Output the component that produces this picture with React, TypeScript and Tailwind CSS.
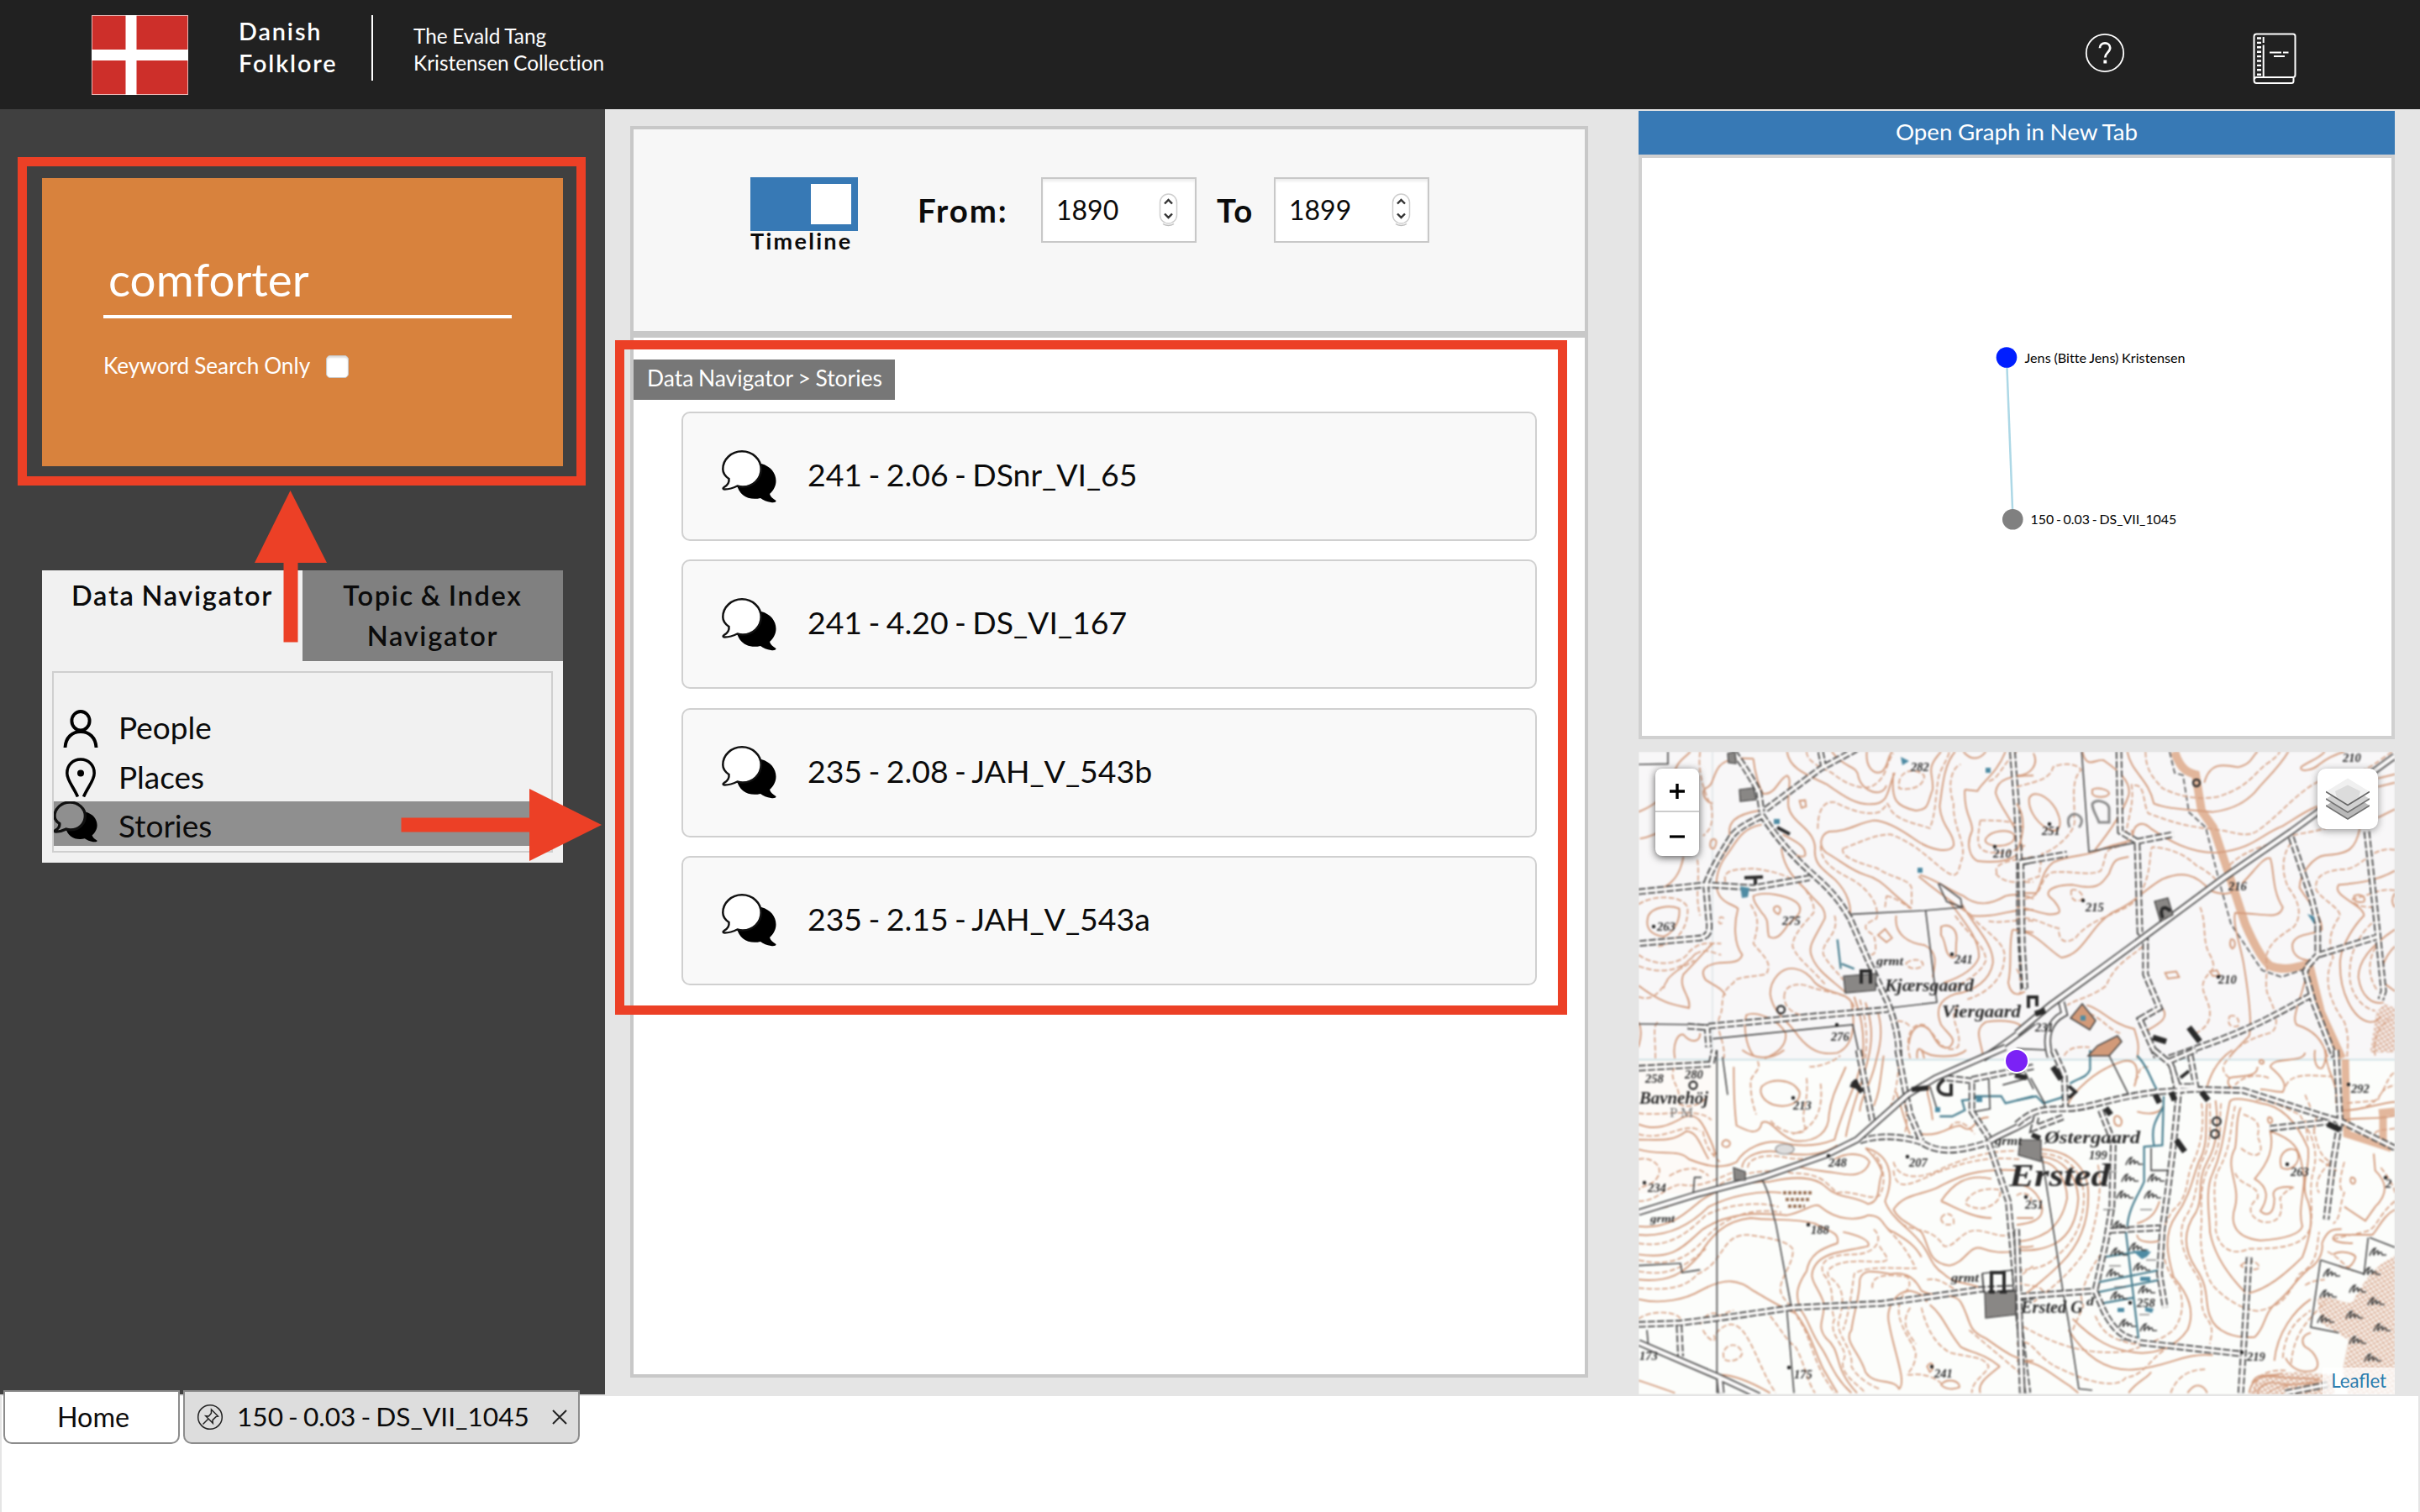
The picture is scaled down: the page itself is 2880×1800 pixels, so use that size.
import React from 'react';

/* ---------- icons ---------- */

function FlagIcon() {
  return (
    <svg width="115" height="95" viewBox="0 0 115 95" className="block shrink-0">
      <rect x="0.5" y="0.5" width="114" height="94" fill="#cd2f2a" stroke="#eab5b3" />
      <path d="M40.5 0h13v95h-13zM0 41h115v13H0z" fill="#fff" />
    </svg>
  );
}

function HelpIcon() {
  return (
    <svg width="48" height="48" viewBox="0 0 48 48" fill="none" stroke="#fff" className="block">
      <circle cx="24" cy="24" r="22.2" strokeWidth="1.8" />
      <path d="M17.9 18.3c.1-3.6 2.700-5.900 6.200-5.900s6.100 2.300 6.100 5.700c0 2.500-1.300 3.900-3.200 5.800-1.900 1.900-2.700 3-2.700 5.600" strokeWidth="2.700" />
      <path d="M24.300 32.500v4" strokeWidth="3.800" />
    </svg>
  );
}

function BookIcon() {
  return (
    <svg width="52" height="62" viewBox="0 0 52 62" fill="none" stroke="#fff" strokeWidth="2" className="block">
      <path d="M1.500 56V4.500c0-2 1-3 3-3h43.500c2 0 2.500 1 2.500 2.500V50c0 2-1 3-2.500 3H4.500c-4 0-4 7 0 7H46c2 0 2.500-1 2.500-2.500V53" />
      <path d="M12.700 5v7M12.700 14.500V53" />
      <path d="M5 6.500h5M5 11.900h5M5 17.300h5M5 22.700h5M5 28.100h5M5 33.500h5M5 38.900h5M5 44.300h5M5 49.700h5" strokeWidth="2.400" />
      <path d="M20 23.500h14M36 23.500h6.500M25 28h13" />
    </svg>
  );
}

function PersonIcon() {
  return (
    <svg width="42" height="46" viewBox="0 0 42 46" fill="none" stroke="#000" strokeWidth="3.900" className="block">
      <ellipse cx="21" cy="13.200" rx="10.600" ry="11.200" />
      <path d="M2.500 45C3 33 11 26 21 26s18 7 18.500 19" />
    </svg>
  );
}

function PinPlaceIcon() {
  return (
    <svg width="42" height="47" viewBox="0 0 42 47" fill="none" stroke="#000" strokeWidth="3.500" className="block">
      <path d="M17.500 46.500C12 34 4.800 27 4.800 18.500 4.800 8.500 12 2 21 2s16.200 6.500 16.200 16.500c0 8.500-7.200 15.500-12.700 28" />
      <circle cx="21" cy="18.500" r="4" fill="#000" stroke="none" />
    </svg>
  );
}

function ChatIcon({ className, bubble, outline }: { className: string; bubble: string; outline: number }) {
  return (
    <svg viewBox="0 0 65 63" className={className} preserveAspectRatio="none">
      <path d="M47 16C58 19 64.500 27 64.500 36.500c0 6-3 11.500-7.500 15.500 1 3.500 4 5.500 7.500 8 .5 2-3 2.500-6 2-5-.7-9-2.500-12.500-5C32 60.500 20 53 18 41z" fill="#000" />
      <path
        d="M24 1.300c12.500 0 22.700 9.500 22.700 21.200S37 43.500 25 43.500c-2.500 0-4.500-.4-6.500-1C13.500 45 8 46.500 3.500 46.500c-2.500 0-2.500-1.500-.5-2.700C7 41.500 9 38 8.500 34 4 31 1.300 27 1.300 22.500 1.300 10.800 11.500 1.300 24 1.300z"
        fill={bubble}
        stroke="#111"
        strokeWidth={outline}
      />
    </svg>
  );
}

function StepperIcon() {
  return (
    <svg width="24" height="42" viewBox="0 0 24 42" fill="none" className="block">
      <rect x="1.500" y="2" width="20" height="35" rx="10" fill="#fff" stroke="#cfcfcf" strokeWidth="1.500" />
      <path d="M5 37.500c3 2.500 10 2.500 13 0" stroke="#bdbdbd" strokeWidth="1.500" />
      <path d="M7 13.500l4.500-4.500 4.500 4.500M7 25.500l4.500 4.500 4.500-4.500" stroke="#333" strokeWidth="2.400" />
    </svg>
  );
}

function PushPinIcon() {
  return (
    <svg width="32" height="32" viewBox="0 0 32 32" fill="none" stroke="#222" strokeWidth="1.500" className="block">
      <circle cx="16" cy="16" r="14.300" />
      <path d="M17.500 7l8 8-2.500.6-4 4 .3 3.600-8.500-8.500 3.600.3 3-3.500zM13.500 18.500L7.500 24.500" />
    </svg>
  );
}

function LayersIcon() {
  return (
    <svg width="52" height="52" viewBox="0 0 52 52" className="block">
      <path d="M0 34l26 16 26-16-26-16z" fill="#b9b9b9" />
      <path d="M0 34l26 16 26-16" fill="none" stroke="#747474" strokeWidth="1.500" />
      <path d="M0 26l26 16 26-16-26-16z" fill="#d2d2d2" />
      <path d="M0 26l26 16 26-16" fill="none" stroke="#747474" strokeWidth="1.500" />
      <path d="M0 17.500l26 16 26-16L26 1.500z" fill="#f0f0f0" />
      <path d="M11 17L26 9.500l15 7.500-2 8-13 8-13-8z" fill="#dcdcdc" />
      <path d="M0 17.500l26 16 26-16" fill="none" stroke="#666" strokeWidth="1.500" />
    </svg>
  );
}

/* ---------- historical map ---------- */

type Sheet = {
  transform: string;
  contours: string[];
  dashedContours: string[];
  roads: string[];
  mainRoads: string[];
  fences: string[];
  water: string[];
};

const sheets: Sheet[] = [
  {
    transform: 'translate(-30 -35) scale(.33333)',
    contours: [
      'M90 320C150 295 190 265 210 200S240 140 275 105M95 415C130 410 140 400 160 395M250 480C240 540 215 570 180 590',
      'M500 130C440 125 390 130 370 170C350 210 355 225 330 235C310 250 330 285 355 290',
      'M500 130C505 180 520 230 535 255C580 260 590 200 620 190C640 200 620 250 625 300C635 360 720 380 720 450C715 500 740 520 790 560C840 610 850 660 845 690',
      'M620 105C630 170 700 190 760 220C830 270 870 295 920 292C990 290 975 240 1005 180',
      'M780 105C830 170 870 150 875 195C890 250 960 270 975 225M905 105C900 160 930 190 960 175C985 150 975 130 995 105',
      'M1000 180C990 280 1010 300 1080 315C1130 310 1120 290 1140 240C1145 180 1110 170 1170 105',
      'M1220 105C1180 150 1175 230 1165 300C1170 370 1220 400 1215 440C1200 470 1130 455 1080 420C1010 370 960 350 930 350C870 360 840 390 770 390C740 400 730 440 760 465C820 500 850 530 900 545C960 560 980 600 1065 665',
      'M530 365C450 380 440 430 400 480C365 530 360 590 380 620C400 650 430 650 445 665C430 720 430 790 460 830C450 865 400 855 370 860C320 870 310 890 330 920C360 940 390 950 400 975',
      'M520 315C430 330 410 360 415 400M415 400C430 440 380 480 350 530',
      'M600 450C610 530 660 570 690 600C730 650 760 660 755 700C720 770 690 800 710 840C730 890 780 920 830 965',
      'M605 400C640 420 690 440 685 475C670 490 620 460 605 440',
      'M500 620C540 600 620 620 650 640C690 670 650 700 625 720C600 760 580 780 555 765C545 720 560 710 530 680C510 650 500 640 500 620Z',
      'M650 880C600 870 560 920 560 970C570 1040 620 1060 660 1120C700 1170 740 1190 800 1180C870 1150 860 1050 850 1000C830 960 760 970 720 930C700 900 680 885 650 880Z',
      'M540 1200C590 1180 620 1150 615 1110C590 1060 510 1030 475 1045C465 1080 470 1150 500 1190',
      'M1095 545C1150 560 1200 600 1250 620C1300 660 1350 650 1400 620C1440 610 1480 620 1500 630M1090 550C1150 600 1220 650 1280 690C1370 700 1430 660 1500 670',
      'M1245 650C1280 720 1360 790 1355 860C1345 920 1290 960 1220 970C1160 990 1150 1030 1170 1080C1200 1120 1230 1130 1200 1160C1160 1170 1150 1130 1130 1100C1090 1060 1060 1100 1055 1150',
      'M1200 640C1260 720 1310 780 1305 840C1290 880 1240 910 1180 930',
      'M1170 730C1200 715 1230 740 1225 780C1220 820 1230 840 1210 840C1180 830 1190 780 1170 760Z',
      'M1010 690C1000 760 1060 790 1110 795C1160 820 1150 860 1140 910M945 760L970 738L995 770L975 785Z',
      'M1330 415C1350 385 1410 380 1430 400C1440 430 1400 445 1360 440C1330 435 1325 425 1330 415Z',
      'M1255 240C1250 330 1290 360 1280 390C1260 430 1270 480 1300 495C1380 505 1440 490 1460 450C1450 380 1370 290 1365 250C1370 200 1420 190 1500 190M1255 240L1300 245C1320 210 1370 180 1400 105',
      'M1250 105C1280 140 1310 130 1330 105M1425 740C1410 800 1425 860 1410 930C1420 980 1450 975 1470 960M1425 740L1500 750',
      'M665 280L685 278L688 300L672 305ZM350 420C365 410 375 425 360 450C345 455 342 435 350 420ZM575 660C590 650 605 665 590 685C575 680 570 670 575 660Z',
      'M125 690C140 660 200 650 235 665C240 700 220 750 180 765C140 760 110 740 125 690Z',
      'M90 940C180 1010 230 1010 270 1020C280 980 230 950 250 900C300 850 340 800 355 790M90 1070C110 1110 90 1150 90 1160M220 1200C210 1150 230 1110 250 1115C280 1150 310 1140 310 1110',
      'M860 980C880 1040 900 1100 890 1200M900 1000C920 1060 930 1120 910 1200M940 1020C960 1080 960 1130 940 1200M1085 1200C1080 1160 1100 1150 1110 1200',
      'M1320 1200C1320 1150 1280 1100 1330 1070C1400 1060 1450 1070 1460 1090',
    ],
    dashedContours: [
      'M690 105C690 140 740 160 780 180C830 220 880 240 920 230C980 200 970 150 1000 110',
      'M300 490C310 560 290 620 310 690M310 105C300 170 320 240 350 300C360 370 340 390 320 405',
      'M400 570C390 530 420 525 500 522C570 530 640 550 680 590C710 630 720 660 715 680C680 720 640 760 640 800C660 850 700 870 760 940',
      'M730 380C730 300 760 280 790 285C840 310 900 335 950 320C990 290 970 280 985 300C1000 350 1080 360 1130 378C1150 330 1150 270 1160 200C1170 160 1190 140 1200 105',
      'M820 450C880 430 930 400 990 400C1070 430 1110 470 1170 520C1220 560 1230 550 1240 500C1270 440 1210 380 1215 290C1190 220 1210 160 1240 150',
      'M820 450C810 480 870 500 940 520C1000 560 1070 560 1065 600L1065 650',
      'M740 440C740 500 790 530 850 560C920 600 950 660 940 700C900 720 880 730 930 760C940 800 940 830 920 830',
      'M490 650C520 700 520 720 500 790C540 840 570 860 545 900C480 910 430 910 430 930C370 970 400 1010 380 1050C360 1100 400 1130 395 1200',
      'M610 980C610 940 650 930 690 940C760 970 850 960 860 1020C850 1060 740 1040 690 1045C650 1050 610 1020 610 980Z',
      'M1020 220C1020 170 1080 160 1110 190C1110 230 1060 245 1020 235Z',
      'M1310 350C1300 420 1290 460 1350 465C1440 470 1430 450 1470 440M1310 350C1380 350 1430 350 1470 380',
      'M1275 690C1340 760 1410 790 1395 850C1390 920 1330 970 1260 990M1220 690C1270 760 1330 800 1330 850C1310 900 1260 920 1200 960',
      'M975 620C990 620 1030 640 1060 665M970 660L975 620M1045 860C1070 840 1110 845 1105 870C1080 885 1050 880 1045 860Z',
      'M90 830C160 880 250 860 270 820C310 780 340 790 385 790M90 870C170 900 240 890 290 830C330 800 370 830 385 830',
      'M90 650C130 620 240 610 265 660C270 740 220 790 160 800M150 1200C150 1120 140 1080 160 1070M90 980C140 1000 170 960 200 910C250 870 290 830 300 820M180 950C190 900 240 880 290 850',
      'M395 700C370 680 370 740 395 710M790 690C810 760 740 780 750 830C780 880 800 890 820 920',
      'M1060 1200C1040 1130 1060 1070 1110 1080C1160 1120 1170 1190 1230 1160C1250 1100 1190 1060 1230 1010M1000 1080C980 1060 1050 1060 1060 1090M880 990C900 1060 910 1100 900 1200',
      'M1340 210C1380 200 1380 160 1440 105M1370 540C1350 500 1430 490 1500 480M1365 540C1400 580 1450 570 1500 570M1340 710C1390 720 1440 700 1500 710M1440 880C1450 900 1470 930 1450 970',
    ],
    roads: [
      'M430 105C470 160 500 210 520 250L530 320',
      'M545 310L740 165L870 95M740 105L750 155',
      'M530 335C480 360 440 380 420 410C390 460 350 520 330 580L340 700C350 760 330 765 310 770L90 790M90 605L330 580L500 590L700 555',
      'M530 330C580 410 640 480 720 550C800 620 820 660 845 700L910 850L980 1000C1010 1080 1020 1140 1020 1200',
      'M340 1085L700 1050L980 1025M265 1085L335 1090L340 1160',
      'M1425 105L1440 300L1450 500L1450 700L1465 960M1460 500L1500 490',
    ],
    mainRoads: ['M1320 1200C1380 1160 1450 1110 1500 1070'],
    fences: [
      'M850 685L1110 672L1250 660M1115 672L1155 1000L985 1020M355 1130L800 1085L855 1080L880 1195M90 1077L340 1080',
      'M90 150L195 148L195 105M1160 575L1190 640L1245 660L1240 630L1165 575',
    ],
    water: ['M800 775L812 880M815 862L860 880'],
  },
  {
    transform: 'translate(450 -35) scale(.33333)',
    contours: [
      'M60 110C80 150 50 190 0 190M235 105C250 170 280 130 310 135C360 170 410 210 400 260C380 320 340 380 280 455',
      'M395 105C410 180 470 200 490 290C540 310 600 310 700 320C780 310 820 280 850 250C890 200 930 170 970 105',
      'M670 215C690 140 740 150 790 160C840 150 840 120 860 105M1015 160C1010 180 1060 170 1080 150C1120 120 1150 110 1170 105M1015 160C1040 140 1080 130 1100 105',
      'M45 270C60 240 110 260 140 310C170 370 150 400 110 380C60 350 40 300 45 270Z',
      'M0 610L70 610C90 580 90 530 130 500C190 470 260 480 310 450C360 430 420 430 415 400C420 360 450 350 480 380C540 420 620 470 720 465C850 450 870 400 950 370C1000 340 1040 310 1075 300',
      'M115 620C100 590 160 580 200 580C290 600 300 580 330 540C350 480 360 490 400 480M115 620C140 640 160 670 150 680C110 700 50 660 0 660',
      'M0 745C60 740 120 820 160 840C240 830 260 730 340 680C430 640 450 600 520 560C590 530 640 540 690 600C740 620 760 610 770 605',
      'M805 575C850 530 880 480 905 485C920 520 910 600 950 660C940 710 870 680 780 680C770 720 800 800 810 860C830 980 840 1080 830 1120C800 1150 780 1170 760 1195',
      'M1225 380C1210 450 1190 470 1100 475C1060 480 1010 540 1010 590C1040 640 1090 690 1090 740C1060 760 1000 750 985 790C980 830 1010 850 1050 850',
      'M1350 530C1280 570 1200 575 1150 580C1120 620 1240 650 1240 690C1210 720 1160 790 1155 850C1150 960 1200 1060 1260 1070C1290 1070 1290 1060 1300 1050',
      'M1350 740C1290 780 1220 840 1220 910C1230 980 1270 1010 1310 1000M1350 800C1310 840 1290 900 1310 930L1350 960M1030 920C1010 1000 980 1060 1000 1080C1060 1100 1090 1130 1110 1195',
      'M250 1010C300 1020 340 1080 420 1095C430 1130 440 1150 430 1200M520 1020C550 1060 500 1080 450 1110M430 1060L515 1025M530 895L570 890L580 910L540 915Z',
      'M690 890L715 885L725 905L700 905ZM765 775C780 770 785 800 770 808C760 800 760 790 765 775ZM1205 620C1220 610 1250 620 1240 640C1220 645 1200 640 1205 620ZM0 290C30 330 30 400 0 460',
      'M1290 200L1350 185M1290 230L1350 215M1290 340L1350 310M1350 610C1330 640 1350 660 1350 660',
      'M270 240C290 230 330 240 330 255C320 270 280 270 270 255Z',
    ],
    dashedContours: [
      'M0 230C80 210 120 200 130 160C170 140 220 150 230 170C190 210 210 280 205 340C220 380 150 450 90 470L80 550C50 560 20 570 0 570',
      'M460 105C460 180 500 210 520 235C570 260 640 280 720 265C830 230 850 180 890 150C920 130 930 120 940 105',
      'M410 220C420 290 400 330 390 400M420 225C460 220 450 290 470 325C540 350 590 370 690 380C790 390 820 420 870 380C950 320 1000 250 1080 210',
      'M0 630C110 640 70 550 130 535C210 530 260 550 300 530C320 490 310 460 340 450C400 430 420 430 410 380',
      'M0 700C60 690 110 730 150 735C150 790 180 790 210 770C260 700 380 680 420 640C490 560 470 450 485 445C560 450 610 480 640 510C680 530 700 550 710 560',
      'M655 660C680 720 660 780 690 830C720 890 690 880 670 920C650 960 690 990 690 1040C690 1080 660 1100 640 1110',
      'M760 510C800 470 850 450 920 430C980 390 1060 400 1120 370M1350 455C1260 440 1230 530 1160 525C1100 530 1060 550 1070 600C1100 640 1150 660 1155 690C1120 740 1110 780 1130 840C1090 920 1120 1000 1170 1070C1190 1130 1180 1160 1180 1195',
      'M980 430C940 480 950 550 970 590C1010 640 1020 690 990 730C930 770 900 790 890 840C900 900 880 940 900 980C930 1040 940 1100 900 1110C830 1130 780 1160 760 1195',
      'M1350 600C1290 590 1260 620 1200 630C1200 660 1250 660 1290 660M1290 700C1230 740 1190 820 1190 880C1180 960 1230 1020 1280 1030M1300 780C1250 830 1250 910 1290 960',
      'M195 600C210 590 240 610 235 630C220 645 190 640 195 600ZM760 1050C780 1040 800 1060 790 1085C765 1090 750 1080 760 1050Z',
      'M450 800C420 830 350 860 320 940C270 980 210 990 180 1010M260 1040C310 1060 330 1100 370 1110M170 1190C190 1150 250 1160 260 1160',
      'M1280 1190C1270 1120 1300 1080 1330 1060M1340 105C1290 140 1280 150 1240 170M10 860C40 880 30 900 10 920',
    ],
    roads: [
      'M365 105L370 390L430 425L440 750L460 770L460 900L510 1020L440 1060L500 1195',
      'M430 425L560 400M10 500L180 470M15 500L20 800L30 950',
      'M980 410L1050 620L1075 720L1075 830L1040 870L1030 890L1060 1000L1135 1195M1080 830L1290 765M1250 390L1290 760L1310 960L1300 990',
      'M1050 975C950 1030 850 1090 680 1150L540 1200',
    ],
    mainRoads: ['M0 1110L120 1010L300 880L450 770L740 555L980 390L1350 120M160 1000L170 1040C110 1070 100 1130 120 1195'],
    fences: ['M232 105L258 462L420 430M0 1165L110 1170'],
    water: [],
  },
  {
    transform: 'translate(-30 355) scale(.33333)',
    contours: [
      'M90 265C150 290 200 270 250 240C300 220 320 260 350 330C380 400 340 370 370 370M90 320C160 320 210 330 260 290C300 290 310 340 340 390',
      'M90 355C170 380 230 350 270 390C320 410 380 430 440 400C470 350 540 320 600 330C680 350 740 340 790 320C810 240 840 180 870 100C880 60 900 20 890 0',
      'M430 60C430 130 430 200 440 270C480 290 520 310 530 260C560 240 590 310 650 325C730 330 770 290 770 230C780 160 800 130 830 60',
      'M530 130C560 100 640 100 665 150C670 190 620 210 570 195C530 180 520 150 530 130Z',
      'M460 420C460 380 530 345 620 370C700 380 760 370 800 340M790 390C840 360 900 370 915 400C900 450 850 450 800 440C740 430 690 430 640 410',
      'M90 630C200 640 250 590 310 540C380 490 470 470 560 470C650 450 720 450 760 490C800 530 860 520 910 550C960 540 940 480 960 440C950 400 920 370 900 350',
      'M90 660C200 670 280 620 340 560C420 520 520 500 600 510M90 730C220 750 250 700 320 640C410 580 510 580 620 590C680 580 720 540 740 560C800 610 870 610 910 590C970 590 960 640 1000 650C1050 680 1080 700 1100 740',
      'M90 820C200 830 250 800 310 730C350 660 400 610 490 600C560 610 650 600 720 620C770 650 810 650 800 690C740 710 700 730 690 790C650 850 650 880 670 930C700 970 700 1000 740 1060C770 1100 780 1160 850 1225',
      'M820 650C870 660 920 680 910 700C830 720 750 720 720 770C690 820 730 840 750 900C760 960 720 980 760 1030C820 1080 780 1130 870 1225',
      'M1000 570C1040 510 1100 520 1160 490C1220 460 1280 420 1450 430M1000 570C1020 610 1060 620 1100 650C1130 700 1120 760 1200 770C1260 760 1270 690 1320 710C1370 730 1410 720 1450 720',
      'M1170 540C1210 480 1260 440 1350 460M1170 540C1220 560 1280 600 1350 600M90 890C170 910 260 890 310 860C400 810 450 820 500 860C570 900 600 920 650 940C700 1000 720 1080 750 1140L800 1225',
      'M900 350C980 370 1010 440 970 540C990 600 1060 640 1090 680C1130 720 1130 770 1180 800C1220 840 1280 830 1310 850',
      'M880 820C890 780 930 790 990 800C1050 790 1080 820 1100 860C1150 890 1210 860 1240 900C1280 970 1260 1000 1330 1030C1400 1080 1440 1110 1500 1110',
      'M880 820C880 880 860 930 850 1000C820 1040 880 1080 900 1150C930 1200 1000 1170 1020 1210C1050 1190 1000 1070 985 980C970 920 1010 860 1060 860C1100 870 1110 880 1120 900',
      'M1380 1130C1330 1170 1300 1190 1310 1225M1380 1130C1320 1080 1270 1080 1240 1060C1190 1000 1180 950 1130 910M1170 1195C1190 1170 1240 1180 1235 1205C1210 1215 1180 1210 1170 1195Z',
      'M380 1160C430 1160 500 1190 560 1225M90 1180C150 1200 180 1210 220 1225M390 330C400 310 430 330 410 345C395 350 385 340 390 330ZM1120 1130C1140 1100 1150 1140 1130 1150Z',
      'M460 0C500 30 560 40 610 0M1100 0C1130 30 1230 30 1260 0M1100 300C1170 310 1200 270 1240 270C1290 310 1280 240 1340 240M1140 250C1130 150 1110 160 1130 130M1010 150C1040 240 1050 290 1060 300',
      'M940 30C920 130 880 170 880 220M965 20C950 130 950 150 930 200M910 30C890 120 850 200 830 310M1440 700C1470 710 1500 700 1500 700M1440 600L1500 600',
    ],
    dashedContours: [
      'M515 40C530 70 500 80 490 110C490 170 500 200 510 230M680 290C640 310 580 280 560 250M700 60C740 60 790 40 810 20M690 100C700 200 660 220 690 290',
      'M740 120C750 200 730 280 640 300M90 225C170 240 300 200 350 250M90 300C180 330 260 250 310 290M320 290C330 350 350 370 380 400',
      'M90 390C130 380 180 410 160 450C140 490 100 480 90 500M200 450C250 420 300 410 340 450M90 540C160 540 180 490 240 480C320 500 400 440 450 430M150 560C200 580 260 510 350 500',
      'M480 420C480 380 560 370 620 385C720 400 750 370 790 370M380 480C440 440 560 420 640 440C750 440 760 480 800 510C860 500 920 540 950 520C980 470 960 400 930 370',
      'M90 690C200 710 270 650 330 590C410 550 520 540 590 560M90 750C220 780 280 730 340 660C400 600 490 560 600 580M90 790C190 810 250 780 330 710',
      'M90 850C190 860 260 850 300 800C400 760 380 660 480 660C550 670 620 680 640 710C650 760 580 830 600 870C610 900 650 920 660 960C700 1010 710 1100 760 1180L790 1225',
      'M930 640C970 680 930 730 860 730C780 730 730 750 750 800C800 860 770 920 790 960C760 1020 850 1070 820 1110C810 1160 870 1190 900 1225',
      'M950 700C980 750 1010 760 900 755C800 750 750 780 770 810C830 850 820 900 810 950C780 1010 860 1060 850 1130C870 1170 920 1200 950 1210',
      'M980 640C1040 700 1060 740 1080 780C1000 780 900 770 860 800C850 870 840 950 820 1000M925 850C920 800 980 800 1050 810C1080 870 1010 850 1020 950C1040 1020 1060 1030 1080 1080C1080 1150 1030 1160 1060 1160C1130 1150 1170 1190 1170 1190',
      'M1010 600C1050 660 1130 620 1180 700C1220 710 1240 640 1300 645C1350 650 1380 670 1410 660M1260 540C1280 500 1340 490 1380 500C1390 540 1340 570 1300 565C1270 560 1250 550 1260 540Z',
      'M1000 430C1010 510 1060 480 1150 440C1250 400 1330 380 1450 390M1000 400C1020 470 1110 460 1180 420C1250 390 1330 360 1440 360',
      'M1100 920C1120 1000 1150 1050 1200 1080C1270 1100 1320 1090 1340 1130C1330 1160 1280 1180 1280 1225M1120 820C1170 810 1200 850 1250 870M1060 920C1020 980 1060 1020 1080 1050M1270 1000C1330 1050 1400 1110 1460 1160',
      'M90 960C130 930 220 930 240 960M310 980C330 940 360 930 380 950C420 930 430 930 430 930M320 1000C340 1040 370 1050 360 1020C400 970 440 960 480 1030C510 1080 540 1170 580 1225M395 1100C380 1060 440 1030 460 1080C460 1110 400 1120 395 1100Z',
      'M220 60C190 110 250 130 230 190C260 210 310 200 330 170M1020 50C1010 150 1000 200 960 250M1040 190C1050 240 1050 260 1040 300M560 950C600 1000 620 1040 650 1060C680 1110 690 1180 720 1225',
      'M1170 600C1190 570 1220 590 1215 620C1190 630 1170 620 1170 600ZM1440 520C1460 500 1500 520 1490 540M1200 280C1220 240 1260 260 1290 300M1440 820C1460 800 1500 770 1500 770',
    ],
    roads: [
      'M875 0L925 255M1015 0L1045 160L1060 230L1100 325',
      'M880 325C960 300 1040 310 1100 330C1160 370 1230 365 1340 330M1340 330L1410 540L1440 870L1450 980L1480 1225M1190 100L1280 110L1280 220L1345 320M1280 105L1500 60',
      'M90 980L240 975L400 955L640 920L960 905L1310 855L1430 850M235 985L240 1095M1450 885L1500 880',
      'M90 65L350 50L360 0',
    ],
    mainRoads: [
      'M1400 -10L1150 100L1050 160L870 320L760 375L530 455L300 515L90 580M1345 325C1400 290 1450 280 1500 240',
      'M90 1045L370 1165L520 1235M380 1175L385 1225',
    ],
    fences: [
      'M530 460C570 540 560 560 580 620L635 915M620 935L645 1225M370 0L370 1225M390 25L408 160M90 770L240 762L245 795L310 785M285 515L290 455L315 455',
      'M1130 130L1155 210M1340 100L1345 210L1290 220M1470 80L1500 140M1390 125L1480 100M120 1000L125 1055',
    ],
    water: ['M1165 237L1210 237L1255 215L1245 180L1290 175L1295 165L1385 165L1400 190L1500 165'],
  },
  {
    transform: 'translate(450 355) scale(.33333)',
    contours: [
      'M180 200C200 150 280 70 380 40C430 30 440 70 420 130M90 355C190 360 250 420 255 500C260 600 230 690 160 760C110 810 60 850 20 880',
      'M90 380C170 390 215 450 220 530C215 610 190 660 140 690C80 720 40 715 0 715M90 400C140 400 180 470 180 530C170 580 150 620 110 650C60 680 30 680 0 685',
      'M0 625C40 620 100 610 90 560C80 510 40 480 0 480M350 240C360 225 385 250 370 270C350 275 345 255 350 240Z',
      'M680 190C670 260 690 330 650 400C630 450 620 520 570 590C520 660 540 740 560 810C610 870 640 930 610 1000C570 1060 490 1090 420 1080C340 1070 280 1040 200 960',
      'M710 180C720 260 720 330 680 400C640 470 670 520 640 580C590 650 600 720 640 780C690 850 670 900 690 950C710 1010 780 1030 850 1025C890 990 880 940 930 900C980 860 1010 800 1060 770C1100 730 1090 690 1090 690',
      'M760 190C740 280 740 350 700 440C670 500 690 600 690 650C710 760 790 840 820 870C890 860 960 800 1020 740C1050 660 1060 600 1040 540C1010 480 1050 420 1040 350C1010 280 960 200 870 190C800 170 760 170 760 190Z',
      'M800 205C780 250 790 290 780 350C740 420 800 480 780 560C760 620 780 670 870 680C950 675 1010 660 1020 630C1000 560 1040 480 1020 420C1010 350 990 320 905 290C920 350 900 400 850 460C900 490 900 530 870 575C900 600 920 580 920 530C900 480 980 490 985 490',
      'M945 420C930 370 970 340 1000 360C1020 400 980 440 945 420ZM860 60C860 100 800 90 760 100C740 130 780 150 830 145M905 60C920 20 1020 50 1030 10M905 60C940 90 970 120 950 150C910 150 900 140 870 140M1065 0C1060 40 1070 70 1090 65C1110 40 1100 10 1105 0',
      'M1170 560L1245 610L1280 560C1330 510 1320 470 1280 430L1275 370M1350 570C1310 590 1290 640 1270 660L1140 660C1110 680 1150 690 1200 690M1350 185C1290 190 1220 220 1160 215M1350 235C1270 250 1220 240 1170 250',
      'M1090 690C1110 640 1130 640 1160 640M1130 730C1160 710 1210 730 1210 740C1200 770 1180 790 1150 770M1100 0C1110 100 1150 110 1140 190M430 220C500 240 520 210 520 200',
      'M185 1000C260 1120 350 1150 430 1140C540 1130 600 1080 700 1090M0 1110C80 1110 110 1150 190 1200L220 1225M400 1225C420 1190 470 1170 480 1150M610 1225C640 1180 670 1200 680 1225M430 620C490 600 500 570 510 540M430 660C430 690 490 690 510 680M920 1110C930 1010 990 930 1050 890M1050 1010C1010 1020 1020 1050 1030 1060C1070 1080 1090 1130 1060 1145C1000 1160 970 1120 960 1100',
      'M680 130C700 60 740 20 770 0M870 35C885 35 885 48 875 50C865 48 865 40 870 35ZM1195 455C1215 455 1210 480 1200 478C1190 475 1190 460 1195 455ZM900 240C915 240 915 260 905 262C895 258 895 245 900 240Z',
      'M830 1225C840 1160 900 1160 960 1170L1080 1175M860 1225C870 1190 900 1180 960 1195L1080 1190M840 1190C860 1150 880 1170 950 1155',
    ],
    dashedContours: [
      'M90 370C180 375 235 430 240 520C240 610 210 680 150 730C100 790 30 780 0 790M290 410C310 500 280 620 260 690C210 790 100 870 60 900',
      'M660 190C670 260 660 340 630 400C600 460 620 520 560 570C500 650 510 760 580 850C600 910 590 960 560 1000C500 1050 430 1060 380 1040C300 1020 290 960 280 950',
      'M690 190C690 260 700 330 660 400C640 450 650 530 600 600C570 670 600 740 640 800C680 860 640 900 680 960C710 1000 690 1030 690 1050',
      'M730 190C720 270 740 330 690 410C650 480 660 560 660 620C650 700 670 800 700 840C760 910 850 940 870 930C960 910 970 870 1010 800C1080 760 1070 700 1080 650',
      'M780 200C760 280 770 340 720 430C690 490 720 600 710 640C720 700 760 740 830 710C950 710 1030 700 1050 630C1060 560 1040 500 1060 430C1080 350 1050 300 1010 230C960 210 900 170 850 180',
      'M810 230C860 250 870 260 860 310C890 370 860 400 800 350M780 440C800 490 870 480 860 530C820 560 830 600 880 615C950 620 950 570 940 530C960 500 990 490 990 490M1060 280C1070 330 1080 380 1120 400C1080 440 1060 480 1080 510',
      'M960 130C980 80 1050 90 1130 95M1170 400C1150 470 1150 500 1170 510C1150 560 1160 600 1130 620M1350 540C1280 600 1290 640 1240 650L1130 675M1350 280C1290 290 1280 280 1270 320M1300 420C1340 470 1350 500 1350 510M1220 210C1320 190 1310 100 1350 80M1180 190L1290 180C1300 140 1330 130 1350 125',
      'M1070 240L1060 300M1030 250L1040 330M1080 390L1140 430L1120 480M1110 720C1150 740 1170 770 1200 790M800 770C830 740 870 760 865 780C840 790 810 780 800 770Z',
      'M0 975C100 1030 190 1080 340 1080C400 1080 440 1060 440 1060M0 1050C60 1020 60 1100 160 1140C260 1190 360 1210 390 1170C470 1160 480 1080 570 1050M950 1100C960 990 1010 960 1050 930M980 1120C990 1000 1050 960 1100 900M1030 840C1060 820 1100 820 1100 820M550 1225C570 1170 610 1140 680 1140M0 830C50 850 80 830 100 870',
      'M200 1000C250 880 240 940 230 880C250 800 280 760 300 730M470 60C420 60 450 90 420 110M1030 160C1040 190 1060 210 1040 220M900 100C850 80 800 100 780 125M850 1225C850 1170 880 1140 960 1145M900 1225C920 1200 970 1200 1080 1180M760 100C730 80 730 50 760 30',
    ],
    roads: [
      'M130 0L170 90L175 210M0 265C60 210 100 210 180 210C260 210 330 170 500 150L640 140L810 145L1090 235L1160 255L1350 350M545 40L640 0M490 0L550 50L580 140L560 340L540 500L520 640L510 800L530 920',
      'M300 215L345 330L340 560L320 680L280 860L310 930C350 1010 390 1030 430 1035M555 60L570 130L640 130L620 20',
      'M1140 0L1155 250L1130 400L1105 605M905 280L1130 255M830 740L810 1070L800 1225M440 1045L800 1085M10 880L280 860M0 640L20 1225M330 645L510 635M165 240L60 280L70 240M960 1225L1110 1195',
    ],
    mainRoads: [],
    fences: [
      'M90 380L165 860L185 970L222 1210L270 1215M50 100L100 190L100 210M1260 670L1350 705M1085 750L1240 800L1255 670M1085 750L1050 990L1150 1010M320 0L400 160M480 350L480 430L550 430',
    ],
    water: [
      'M262 0L262 70C250 100 220 100 190 120M0 180L70 165L95 190L160 170L175 140M430 20C470 60 480 110 500 140M525 165L520 340L455 345L455 470C440 510 400 560 395 630M525 200C490 260 480 280 490 340M390 650L410 820L435 1030',
      'M310 740L470 715M290 830L515 785M290 865L515 820M305 905L415 885',
    ],
  },
];

type MapLabel = { x: number; y: number; size: number; width: number; text: string };

const placeNames: MapLabel[] = [
  { x: 293, y: 285, size: 22, width: 106, text: 'Kjærsgaard' },
  { x: 361, y: 316, size: 21, width: 94, text: 'Viergaard' },
  { x: 1, y: 419, size: 20, width: 82, text: 'Bavnehöj' },
  { x: 483, y: 466, size: 21, width: 114, text: 'Østergaard' },
  { x: 441, y: 517, size: 37, width: 120, text: 'Ersted' },
  { x: 455, y: 668, size: 20, width: 74, text: 'Ersted G' },
  { x: 533, y: 659, size: 14, width: 9, text: 'd' },
  { x: 283, y: 254, size: 15, width: 32, text: 'grmt' },
  { x: 372, y: 631, size: 15, width: 33, text: 'grmt' },
  { x: 424, y: 468, size: 15, width: 32, text: 'grmt' },
  { x: 14, y: 560, size: 13, width: 29, text: 'grmt' },
];

const elevations: [number, number, string][] = [
  [22, 213, '263'], [171, 206, '275'], [229, 344, '276'], [376, 252, '241'], [422, 126, '210'], [324, 23, '282'],
  [480, 99, '251'], [532, 190, '215'], [702, 165, '216'], [690, 276, '210'], [472, 333, '231'], [838, 12, '210'],
  [55, 389, '280'], [8, 394, '258'], [184, 426, '213'], [226, 494, '248'], [322, 494, '207'], [11, 524, '234'],
  [205, 574, '188'], [185, 746, '175'], [352, 745, '241'], [1, 724, '173'], [848, 406, '292'], [776, 505, '263'],
  [460, 544, '251'], [536, 485, '199'], [724, 725, '219'], [593, 661, '258'], [889, 519, '2'],
];

const spots: [number, number][] = [
  [18, 208], [373, 241], [489, 86], [529, 177], [690, 268], [236, 325], [184, 412], [226, 481], [320, 482], [7, 513],
  [202, 563], [179, 733], [349, 732], [845, 396], [772, 491], [461, 530], [718, 715], [889, 507], [585, 656], [424, 113],
];

const marsh: [number, number][] = [
  [580, 492], [575, 512], [606, 512], [569, 532], [602, 532], [564, 568], [562, 600], [584, 594], [589, 618], [557, 625],
  [595, 645], [562, 652], [572, 685], [597, 690], [870, 600], [815, 625], [863, 623], [811, 650], [846, 644], [868, 659],
  [808, 680], [842, 675], [875, 690], [846, 705], [864, 726],
];

function MapSheet({ sheet }: { sheet: Sheet }) {
  return (
    <g transform={sheet.transform} fill="none">
      <path d={sheet.contours.join('')} stroke="#d39b7c" strokeWidth="5.800" />
      <path d={sheet.dashedContours.join('')} stroke="#d6a184" strokeWidth="5.200" strokeDasharray="20 8" />
      <path d={sheet.water.join('')} stroke="#4b8091" strokeWidth="7" />
      <path d={sheet.fences.join('')} stroke="#4a4a4a" strokeWidth="5" />
      <path d={sheet.roads.join('')} stroke="#444" strokeWidth="23" strokeDasharray="26 7" />
      <path d={sheet.roads.join('')} stroke="#faf9f8" strokeWidth="12" />
      <path d={sheet.mainRoads.join('')} stroke="#4a4a4a" strokeWidth="25" />
      <path d={sheet.mainRoads.join('')} stroke="#fbfafa" strokeWidth="14.500" />
    </g>
  );
}

function HistoricalMap() {
  return (
    <svg width="900" height="765" viewBox="0 0 900 765" className="block blur-[0.8px]">
      <defs>
        <pattern id="hatch" width="3" height="3" patternUnits="userSpaceOnUse">
          <rect width="3" height="3" fill="#a9a5a2" />
          <path d="M0 3L3 0" stroke="#4a4a4a" strokeWidth="1" />
        </pattern>
        <pattern id="heath" width="7" height="6" patternUnits="userSpaceOnUse" patternTransform="rotate(12)">
          <path d="M0 1.500q2 2 3.500 0t3.500 0M0 4.500q2-2 3.500 0t3.500 0" stroke="#d6a286" strokeWidth="1.200" fill="none" />
        </pattern>
      </defs>
      <rect width="900" height="765" fill="#f8f7f8" />
      <rect y="366" width="900" height="399" fill="#fcfdfb" />
      <rect y="366" width="92" height="160" fill="#fdfaf7" />
      <path d="M0 366.500H900" stroke="#c2dbe0" strokeWidth="1.500" />
      <path d="M88 0V366" stroke="#dde2e6" strokeWidth="1.500" />

      <path d="M808 652C820 640 835 660 850 655C865 625 880 610 900 600V765H845L838 735L845 700L812 680z" fill="url(#heath)" />
      <path d="M728 765C735 740 760 742 780 738L828 742V765H730z" fill="url(#heath)" />
      <path d="M872 350L878 310L888 300L900 305V358H870z" fill="url(#heath)" />

      <g fill="none" stroke="#deaa8b" strokeOpacity="0.85">
        <path d="M638 0C645 22 655 25 663 27L670 70L684 90L704 150L722 205C735 235 745 250 752 255C770 262 785 255 798 253L812 310L837 365" strokeWidth="10" />
        <path d="M841 366L843 455L896 472M881 430L900 428M886 430V470" strokeWidth="9" />
      </g>
      <path d="M632 0L638 25L648 28L655 72L675 90L690 150L705 205L742 260L765 268L795 258" fill="none" stroke="#555" strokeWidth="1.700" strokeDasharray="7 3" />

      {sheets.map((sheet) => (
        <MapSheet key={sheet.transform} sheet={sheet} />
      ))}

      <g fill="#d29a79" stroke="#444" strokeWidth="1.500">
        <path d="M514 317L528 300L544 320L537 331z" />
        <path d="M535 362L546 350L570 338L575 345L560 362z" />
      </g>

      <g fill="url(#hatch)" stroke="#3c3c3c" strokeWidth="1.200">
        <path d="M120 45L137 43L140 57L121 59z" />
        <path d="M244 267L283 264L282 284L246 287z" />
        <path d="M614 178L630 174L636 194L621 202z" />
        <path d="M412 644L449 642L449 670L413 674z" />
        <path d="M454 462L479 462L479 488L452 480z" />
        <path d="M113 495L127 500L127 510L114 510z" />
        <path d="M106 2L115 0L116 14L107 13z" />
      </g>
      <path d="M409 621L445 617L446 642" fill="none" stroke="#444" strokeWidth="1.500" />
      <path d="M409 621L411 644" fill="none" stroke="#444" strokeWidth="2" />
      <g fill="none" stroke="#2a2a2a" strokeWidth="4">
        <path d="M265 276V261H276V276M420 641V620H435V641M417 643H424M430 643H438M464 305V292H474V303M624 198C619 186 626 182 633 190" />
        <path d="M126 150L148 149M139 149V158M165 90L180 98M252 397L262 400L258 390M364 390C350 400 358 410 372 408L372 395M645 388L655 380M512 398L520 405L512 412" />
        <path d="M493 375L503 390M615 408L620 418M634 405L638 415M670 405L678 415M556 424L562 432M640 462L650 476M820 443L835 450M612 340L628 345M655 328L668 345M472 312L484 308" strokeWidth="7" />
        <path d="M325 402L345 400M448 385L462 388M468 456L478 460M255 392L266 405" strokeWidth="6" />
      </g>
      <g fill="none" stroke="#2f2f2f" strokeWidth="2.400">
        <circle cx="169.500" cy="307" r="4.500" />
        <circle cx="664" cy="37" r="4" />
        <circle cx="65" cy="397" r="4.500" />
        <circle cx="688" cy="440" r="4.800" />
        <circle cx="686" cy="455" r="4.800" />
        <path d="M513 90C507 75 520 70 526 78C530 84 524 90 524 90M540 62C545 55 560 60 560 68L560 84L548 84C545 75 540 70 540 62z" strokeWidth="3" stroke="#8a8a8a" />
        <ellipse cx="174" cy="473" rx="11" ry="6" fill="#ddd" stroke="#888" strokeWidth="1.200" />
      </g>
      <path d="M121 160L132 162L130 173L123 174zM161 80h7v6h-7zM332 138h6v6h-6zM312 6l10 5-8 5zM413 19h6v6h-6zM796 193l8 3v9zM526 314h6v6h-6zM353 423h6v6h-6zM402 411h7v6h-7zM588 594l22 1-5 6-6 3zM597 625h12v5h-12zM603 661l10 2-2 5-8-2zM570 662h8v5h-8z" fill="#4e8ba3" />
      <g fill="none" stroke="#555" strokeWidth="1.200">
        {marsh.map(([x, y]) => (
          <path key={`${x}-${y}`} d={`M${x} ${y}q3-9 7-9q-4 6-2 8q3-5 5-5l0 5q2-4 4-3l1 3h5`} stroke="#3c3c3c" strokeWidth="1.600" />
        ))}
        <path d="M553 500h16M553 545h14M597 545h14M560 612h14M596 670h12M566 637h14M604 605h12M573 700h12" />
        <path d="M172 525h36M175 533h30M178 541h20" stroke="#9a7358" strokeWidth="4" strokeDasharray="4 2" />
      </g>
      {spots.map(([x, y]) => (
        <circle key={`${x}-${y}`} cx={x} cy={y} r="2.200" fill="#222" />
      ))}
      <g fontFamily="'Liberation Serif', serif" fill="#2b2b2b">
        <g fontStyle="italic" fontWeight="700">
          {placeNames.map((l) => (
            <text key={`${l.x}-${l.y}`} x={l.x} y={l.y} fontSize={l.size} textLength={l.width} lengthAdjust="spacingAndGlyphs">
              {l.text}
            </text>
          ))}
        </g>
        <g fontSize="14.500" fontWeight="700" fontStyle="italic">
          {elevations.map(([x, y, t]) => (
            <text key={`${x}-${y}`} x={x} y={y}>
              {t}
            </text>
          ))}
        </g>
        <text x="37" y="435" fontSize="17" fill="#777">
          P M
        </text>
      </g>
    </svg>
  );
}

/* ---------- page sections ---------- */

function Header() {
  return (
    <header className="flex h-[130px] shrink-0 items-start bg-[#212121] text-white">
      <div className="mt-[18px] ml-[109px]">
        <FlagIcon />
      </div>
      <div className="mt-[18px] ml-[60px] w-[158px] text-[28.8px] leading-[38px] font-semibold tracking-[1.9px]">
        Danish
        <br />
        Folklore
      </div>
      <div className="mt-[18px] h-[78px] w-[2px] bg-white" />
      <div className="mt-[27px] ml-[48px] text-[24.400px] leading-[32px] [font-variant-ligatures:none] [word-spacing:-0.8px]">
        The Evald Tang
        <br />
        Kristensen Collection
      </div>
      <div className="mt-[39px] mr-[147px] ml-auto flex items-start gap-[152px]">
        <HelpIcon />
        <BookIcon />
      </div>
    </header>
  );
}

function SearchBox() {
  return (
    <section className="mx-[50px] mt-[82px] h-[343px] w-[620px] bg-[#d8823d] px-[73px] pt-[88px] text-white">
      <div className="w-[486px] border-b-4 border-white pb-[11px] pl-[6px] text-[54.700px] leading-[64px]">comforter</div>
      <label className="mt-[40px] flex items-center text-[26.200px] leading-[32px] [word-spacing:-0.8px]">
        <span className="w-[265px]">Keyword Search Only</span>
        <span className="mt-[2px] h-[27px] w-[27px] rounded-[5px] border border-[#c9c9c9] bg-white shadow-[inset_0_2px_2px_#ddd]" />
      </label>
    </section>
  );
}

function NavRow({ icon, label, selected }: { icon: React.ReactNode; label: string; selected?: boolean }) {
  return (
    <li className={selected ? 'flex h-[53px] bg-[#8f8f8f]' : 'flex h-[53px]'}>
      <div className="w-[77px]">{icon}</div>
      <span className="pt-[2px] text-[37px] leading-[53px]">{label}</span>
    </li>
  );
}

function Navigator() {
  return (
    <section className="mx-[50px] mt-[124px] h-[348px] w-[620px] bg-[#f1f1f1] text-[#0b0b0b]">
      <div className="flex h-[108px] text-center text-[32.600px] leading-[48px] font-semibold tracking-[1.700px] [word-spacing:-2px]">
        <div className="w-[310px] pt-[6px]">Data Navigator</div>
        <div className="w-[310px] bg-[#808080] pt-[6px]">
          Topic &amp; Index
          <br />
          Navigator
        </div>
      </div>
      <ul className="mx-[12px] mt-[12px] flex h-[216px] flex-col gap-[5.500px] border-2 border-[#cfcfcf] pt-[36px]">
        <NavRow icon={<div className="pt-[8px] pl-[11px]"><PersonIcon /></div>} label="People" />
        <NavRow icon={<div className="pt-[6px] pl-[11px]"><PinPlaceIcon /></div>} label="Places" />
        <NavRow icon={<ChatIcon className="h-[49px] w-[52px]" bubble="#8f8f8f" outline={4.2} />} label="Stories" selected />
      </ul>
    </section>
  );
}

function YearInput({ value }: { value: string }) {
  return (
    <div className="flex h-[78px] w-[185px] items-center justify-between border-2 border-[#c8c8c8] bg-white pr-[19px] pl-[16px] text-[32px] shadow-[inset_0_3px_3px_#eee]">
      <span>{value}</span>
      <StepperIcon />
    </div>
  );
}

function TimelinePanel() {
  return (
    <section className="flex h-[248px] items-start border-4 border-[#c8c8c8] bg-[#f7f7f7] pt-[57px] pl-[139px] text-[#0b0b0b]">
      <div className="w-[128px]">
        <div className="flex h-[64px] w-[128px] items-center justify-end bg-[#3779b5] pr-[8px]">
          <div className="h-[48px] w-[48px] bg-white" />
        </div>
        <div className="text-[27px] leading-[24px] font-bold tracking-[2.300px]">Timeline</div>
      </div>
      <div className="ml-[71px] flex h-[78px] items-center">
        <span className="w-[147px] pt-[2px] text-[38.400px] font-bold tracking-[1.900px]">From:</span>
        <YearInput value="1890" />
        <span className="ml-[24px] w-[68px] pt-[2px] text-[38.400px] font-bold tracking-[1.900px]">To</span>
        <YearInput value="1899" />
      </div>
    </section>
  );
}

const stories = ['241 - 2.06 - DSnr_VI_65', '241 - 4.20 - DS_VI_167', '235 - 2.08 - JAH_V_543b', '235 - 2.15 - JAH_V_543a'];

function StoriesPanel() {
  return (
    <section className="h-[1242px] border-4 border-[#c8c8c8] bg-white pt-[26px]">
      <div className="h-[48px] w-[311px] bg-[#777] pl-[16px] text-[26.400px] leading-[45px] whitespace-nowrap text-white [word-spacing:-1px]">
        Data Navigator &gt; Stories
      </div>
      <div className="mt-[14px] ml-[57px] flex w-[1018px] flex-col gap-[22.300px]">
        {stories.map((story) => (
          <article key={story} className="flex h-[154px] items-center gap-[37px] rounded-[10px] border-2 border-[#d0d0d0] bg-[#f9f9f9] pl-[46px]">
            <ChatIcon className="h-[63px] w-[65px]" bubble="#fff" outline={2.5} />
            <span className="pb-[4px] text-[37.400px] text-[#0b0b0b] [word-spacing:-2.200px]">{story}</span>
          </article>
        ))}
      </div>
    </section>
  );
}

function GraphPanel() {
  return (
    <section>
      <div className="h-[52px] bg-[#3779b5] text-center text-[27.700px] leading-[49px] text-white [word-spacing:-0.600px]">Open Graph in New Tab</div>
      <div className="h-[696px] border-4 border-[#d0d0d0] bg-white">
        <svg width="892" height="688" viewBox="0 0 892 688" className="block font-['Lato'] [font-variant-ligatures:none]">
          <path d="M434 237.500L441.500 430" stroke="#add8e6" strokeWidth="2.500" />
          <circle cx="434" cy="237.500" r="12.300" fill="#001eff" />
          <circle cx="441.300" cy="430.300" r="12.300" fill="#808080" />
          <text x="455.500" y="243.500" fontSize="16.200" className="[word-spacing:-0.400px]">Jens (Bitte Jens) Kristensen</text>
          <text x="462.500" y="436" fontSize="15.900" className="[word-spacing:-1.300px]">150 - 0.03 - DS_VII_1045</text>
        </svg>
      </div>
    </section>
  );
}

function MapPanel() {
  return (
    <section className="relative mt-[15px] h-[765px] overflow-hidden">
      <HistoricalMap />
      <div className="absolute top-[353px] left-[435px] h-[30px] w-[30px] rounded-full border-2 border-white bg-[#7b22f5]" />
      <div className="absolute top-[20px] left-[20px] w-[52px] rounded-[8px] bg-white shadow-[0_2px_10px_rgba(0,0,0,0.65)]">
        <div className="flex h-[52px] items-center justify-center border-b-2 border-[#ccc] pt-[4px]">
          <svg width="18" height="18" viewBox="0 0 18 18" stroke="#000" strokeWidth="3.400">
            <path d="M0 9h18M9 0v18" />
          </svg>
        </div>
        <div className="flex h-[52px] items-center justify-center">
          <svg width="18" height="18" viewBox="0 0 18 18" stroke="#000" strokeWidth="3.200">
            <path d="M0 12h18" />
          </svg>
        </div>
      </div>
      <div className="absolute top-[20px] right-[20px] flex h-[72px] w-[72px] items-center justify-center rounded-[10px] bg-white shadow-[0_2px_10px_rgba(0,0,0,0.4)]">
        <LayersIcon />
      </div>
      <div className="absolute right-0 bottom-0 h-[32px] bg-white/70 pr-[10px] pl-[10px] text-[22.200px] leading-[31px] text-[#2a7cad]">Leaflet</div>
    </section>
  );
}

function BottomTabs() {
  return (
    <footer className="relative z-10 -mt-[7px] flex items-start gap-[4px] pl-[2px] text-[#0b0b0b]">
      <div className="flex h-[64px] w-[210px] items-center justify-center rounded-b-[10px] border-2 border-[#8c8c8c] bg-white pl-[4px] text-[32.300px]">Home</div>
      <div className="flex h-[64px] w-[472px] items-center rounded-b-[10px] border-2 border-[#8c8c8c] bg-[#ddd] pl-[14px]">
        <PushPinIcon />
        <span className="ml-[16px] w-[375px] text-[31.600px] whitespace-nowrap [word-spacing:-2px]">150 - 0.03 - DS_VII_1045</span>
        <svg width="18" height="18" viewBox="0 0 18 18" stroke="#222" strokeWidth="2" fill="none">
          <path d="M1 1l16 16M17 1L1 17" />
        </svg>
      </div>
    </footer>
  );
}

function Annotations() {
  return (
    <>
      <div className="absolute top-[186.500px] left-[21px] z-20 h-[391px] w-[675.500px] border-[11.500px] border-[#ec4026]" />
      <div className="absolute top-[404.500px] left-[732px] z-20 h-[803.500px] w-[1132.500px] border-[11.500px] border-[#ec4026]" />
      <svg width="88" height="182" viewBox="0 0 88 182" className="absolute top-[584px] left-[302px] z-20" fill="#ec4026">
        <path d="M43.500 0L87 86H52.500v94.500H35.500V86H1z" />
      </svg>
      <svg width="240" height="88" viewBox="0 0 240 88" className="absolute top-[938px] left-[477px] z-20" fill="#ec4026">
        <path d="M.5 35.500H153V1l86 43-86 43V52.500H.5z" />
      </svg>
    </>
  );
}

export default function App() {
  return (
    <div className="relative flex h-[1800px] w-[2880px] flex-col overflow-hidden bg-white font-['Lato',sans-serif]">
      <Header />
      <main className="flex h-[1532px] shrink-0 bg-[#e5e5e5]">
        <aside className="flex h-[1530px] w-[720px] shrink-0 flex-col bg-[#404040]">
          <SearchBox />
          <Navigator />
        </aside>
        <div className="mt-[20px] ml-[30px] w-[1140px]">
          <TimelinePanel />
          <StoriesPanel />
        </div>
        <div className="mt-[2px] ml-[60px] w-[900px]">
          <GraphPanel />
          <MapPanel />
        </div>
      </main>
      <div className="h-[138px] shrink-0 border-x-2 border-[#e5e5e5] bg-white">
        <BottomTabs />
      </div>
      <Annotations />
    </div>
  );
}
